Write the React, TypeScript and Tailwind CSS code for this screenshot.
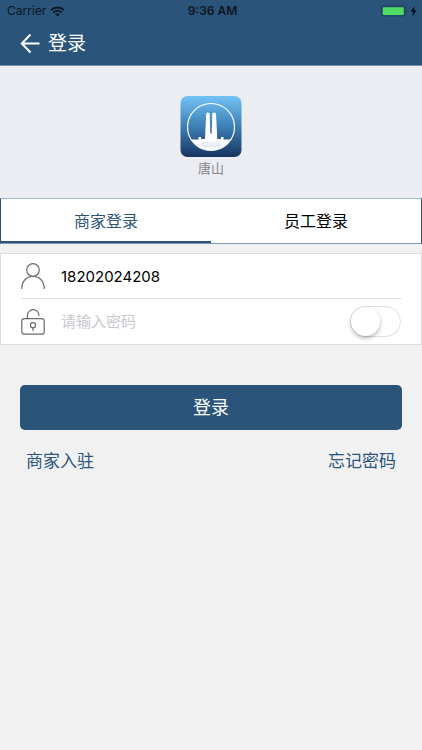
import { useState } from "react";

const tabs = [
  { id: "merchant", label: "商家登录" },
  { id: "staff", label: "员工登录" },
];

const StatusBar = () => (
  <div className="grid h-[22px] grid-cols-3 items-center pl-[7px] pr-1 text-[#0b1620]">
    <div className="flex items-center gap-1">
      <span className="text-[12px]">Carrier</span>
      <svg className="h-[11px] w-[15px]" viewBox="0 0 15 11" aria-hidden="true">
        <path d="M1 4.1a9.4 9.4 0 0 1 13 0" fill="none" stroke="currentColor" strokeWidth="2" />
        <path d="M3.3 6.5a6 6 0 0 1 8.4 0" fill="none" stroke="currentColor" strokeWidth="1.8" />
        <path d="M5.3 8.3a3.2 3.2 0 0 1 4.4 0L7.5 10.6z" fill="currentColor" />
      </svg>
    </div>
    <span className="text-center text-[12px] font-semibold">9:36 AM</span>
    <svg className="h-3 w-[37px] justify-self-end" viewBox="0 0 37 12" aria-hidden="true">
      <rect x="0.5" y="1" width="23.5" height="10" rx="2.2" fill="none" stroke="#1c3d57" />
      <rect x="1.8" y="2.2" width="21" height="7.8" rx="1" fill="#4cd964" />
      <path d="M25.2 4.2c1.3.5 1.3 3 0 3.6z" fill="#1c3d57" />
      <path d="M33.8 1 29.6 6.6h2.6L31.2 11.4l4.4-6.2h-2.7z" fill="#060d13" />
    </svg>
  </div>
);

const AppLogo = () => (
  <svg className="size-[62px]" viewBox="0 0 62 62" aria-hidden="true">
    <defs>
      <linearGradient id="logo-sky" x1="0" y1="0" x2="0" y2="1">
        <stop offset="0" stopColor="#72c3f5" />
        <stop offset="0.5" stopColor="#3d7fb5" />
        <stop offset="1" stopColor="#17355f" />
      </linearGradient>
      <clipPath id="logo-disc">
        <circle cx="31" cy="31" r="23.5" />
      </clipPath>
    </defs>
    <rect x="0.5" y="0" width="61" height="61" rx="7" fill="url(#logo-sky)" />
    <g clipPath="url(#logo-disc)" fill="#fff">
      <path d="M6 43.5h12.500V41h2.500v2h20v-2h2.500v2.500H56v14H6z" />
      <path d="M25 43 26.200 17.500 27.600 16.300 29.600 17.500 30.500 43z" />
      <path d="M31.600 43 32.300 17.500 34 16.300 36 17.500 37.300 43z" />
      <path d="M28 37.5h6V43h-6z" />
      <path d="M22.500 45.500h17l3 3.500h-23z" fill="#eef1f6" />
      <path d="M20 49h22L38 51.500H24z" fill="#e6eaf2" />
    </g>
    <circle cx="31" cy="31" r="23.5" fill="none" stroke="#fff" strokeWidth="1.2" />
  </svg>
);

const UserIcon = () => (
  <svg className="h-7 w-6 shrink-0" viewBox="0 0 24 28" fill="none" stroke="#6b6b6b" strokeWidth="1.2" strokeLinecap="round" aria-hidden="true">
    <circle cx="12" cy="8" r="6.3" />
    <path d="M.8 26.5C.8 19.500 5.400 14.300 12 14.300S23.200 19.500 23.200 26.500" />
  </svg>
);

const LockIcon = () => (
  <svg className="h-7 w-6 shrink-0" viewBox="0 0 24 28" fill="none" stroke="#6b6b6b" strokeWidth="1.2" strokeLinecap="round" aria-hidden="true">
    <rect x="0.8" y="10.7" width="22.4" height="15.5" rx="2.5" />
    <path d="M6.4 10.7V7.5a5.8 5.8 0 0 1 11.6 0" />
    <circle cx="12" cy="17.3" r="2.6" />
    <path d="M12 19.9v2.600" />
  </svg>
);

const App = () => {
  const [activeTab, setActiveTab] = useState("merchant");
  const [account, setAccount] = useState("18202024208");
  const [password, setPassword] = useState("");
  const [showPassword, setShowPassword] = useState(false);

  return (
    <div className="min-h-screen bg-[#f1f1f1] font-[Inter,'Noto_Sans_CJK_SC',sans-serif] text-black">
      <header className="border-b border-[#7390b0] bg-[#2a547a]">
        <StatusBar />
        <div className="flex h-[43px] items-center gap-2 px-5 text-white">
          <button type="button" aria-label="返回">
            <svg className="size-5" viewBox="0 0 20 20" fill="none" stroke="currentColor" strokeWidth="2" aria-hidden="true">
              <path d="M19.500 9.500H2.500M10.500.5 1.800 9.500l8.700 9" />
            </svg>
          </button>
          <h1 className="text-[19px] leading-6">登录</h1>
        </div>
      </header>

      <section className="flex flex-col items-center bg-[#ecedf2] pt-[30px] pb-5">
        <AppLogo />
        <p className="text-[13px] leading-5 text-[#86878a]">唐山</p>
      </section>

      <div role="tablist" className="grid grid-cols-2 border border-[#7f9ab5] border-x-[#2a547a] border-t-[#a9bacd] bg-white">
        {tabs.map((tab) => (
          <button
            key={tab.id}
            type="button"
            role="tab"
            aria-selected={activeTab === tab.id}
            onClick={() => setActiveTab(tab.id)}
            className={
              activeTab === tab.id
                ? "h-11 border-b-2 border-[#2a547a] pt-[2px] text-[16px] text-[#2a547a]"
                : "h-11 border-b-2 border-transparent pt-[2px] text-[16px]"
            }
          >
            {tab.label}
          </button>
        ))}
      </div>

      <form onSubmit={(e) => e.preventDefault()}>
        <div className="mt-[9px] border border-[#dcdcdc] bg-white px-5">
          <div className="flex h-[45px] items-center gap-4 border-b border-[#e0e0e0]">
            <label htmlFor="account" aria-label="账号">
              <UserIcon />
            </label>
            <input
              id="account"
              type="text"
              value={account}
              onChange={(e) => setAccount(e.target.value)}
              className="min-w-0 flex-1 pt-[2px] text-[15px] outline-none"
            />
          </div>
          <div className="flex h-[45px] items-center gap-4">
            <label htmlFor="password" aria-label="密码">
              <LockIcon />
            </label>
            <input
              id="password"
              type={showPassword ? "text" : "password"}
              value={password}
              placeholder="请输入密码"
              onChange={(e) => setPassword(e.target.value)}
              className="min-w-0 flex-1 pt-[2px] text-[15px] outline-none placeholder:text-[#c7c7cc]"
            />
            <input
              type="checkbox"
              role="switch"
              aria-label="显示密码"
              checked={showPassword}
              onChange={(e) => setShowPassword(e.target.checked)}
              className="h-[31px] w-[51px] shrink-0 appearance-none rounded-full border border-[#dedede] bg-white before:block before:size-[29px] before:rounded-full before:bg-white before:shadow-[0_2px_4px_rgba(0,0,0,0.3)] checked:bg-[#4cd964] checked:before:ml-5"
            />
          </div>
        </div>

        <div className="px-5 pt-10">
          <button type="submit" className="h-[45px] w-full rounded-[5px] bg-[#2a547a] text-[18px] text-white">
            登录
          </button>
          <div className="mt-[18px] flex justify-between px-[6px] text-[17px] leading-[26px] text-[#2a547a]">
            <a href="#join">商家入驻</a>
            <a href="#forgot">忘记密码</a>
          </div>
        </div>
      </form>
    </div>
  );
};

export default App;
